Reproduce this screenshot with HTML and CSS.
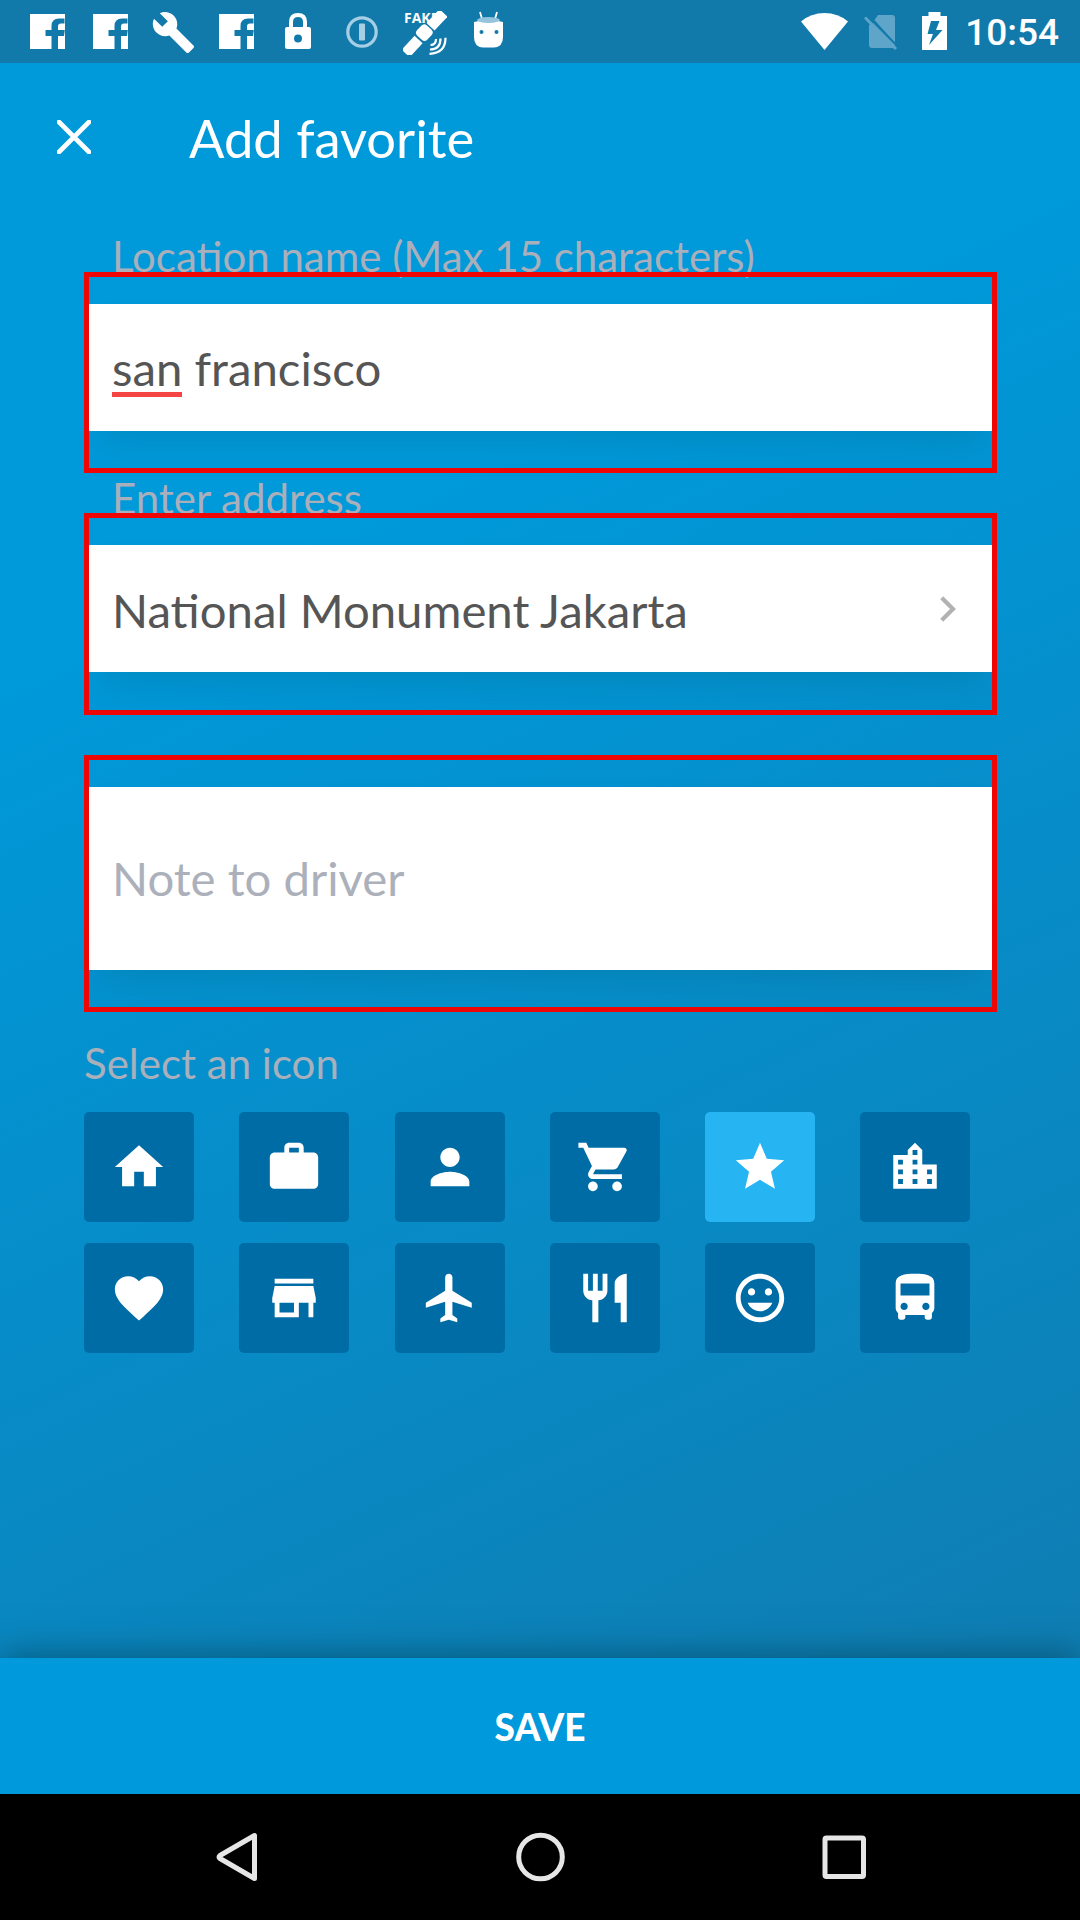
FILE: index.html
```html
<!DOCTYPE html>
<html lang="en">
<head>
<meta charset="utf-8">
<title>Add favorite</title>
<link rel="stylesheet" href="styles.css">
</head>
<body>
<div class="screen">
  <div class="status">
    <div class="status-left">
      <svg class="fb" viewBox="0 0 35 35"><path fill="#fff" d="M0 0h35v35h-7V22h6l.8-6H28v-3.500q0-3 3-3h3.500V4.500H29q-7.500 0-7.500 7.500v4h-6v6h6v13H0z" /></svg>
      <svg class="fb" viewBox="0 0 35 35"><path fill="#fff" d="M0 0h35v35h-7V22h6l.8-6H28v-3.500q0-3 3-3h3.500V4.500H29q-7.500 0-7.500 7.500v4h-6v6h6v13H0z" /></svg>
      <svg class="wrench" viewBox="0 0 23 23"><path fill="#fff" d="M22.700 19l-9.100-9.100c.9-2.300.4-5-1.500-6.900-2-2-5-2.400-7.400-1.300L9 6 6 9 1.600 4.700C.4 7.100.9 10.100 2.900 12.100c1.900 1.900 4.600 2.400 6.900 1.500l9.100 9.100c.4.4 1 .4 1.400 0l2.300-2.300c.5-.4.5-1.100.1-1.400z"/></svg>
      <svg class="fb" viewBox="0 0 35 35"><path fill="#fff" d="M0 0h35v35h-7V22h6l.8-6H28v-3.500q0-3 3-3h3.500V4.500H29q-7.500 0-7.500 7.500v4h-6v6h6v13H0z" /></svg>
      <svg class="lock" viewBox="0 0 26 36"><path d="M6 16V9q0-7 7-7t7 7v7" fill="none" stroke="#fff" stroke-width="4"/><path fill="#fff" fill-rule="evenodd" d="M2 14h22q2 0 2 2v18q0 2-2 2H2q-2 0-2-2V16q0-2 2-2zm11 7.500a4 4 0 1 0 0 8 4 4 0 0 0 0-8z"/></svg>
      <svg class="keyhole" viewBox="0 0 32 32"><circle cx="16" cy="16" r="14.200" fill="none" stroke="#a6cfe6" stroke-width="3.200"/><rect x="13" y="7.500" width="6" height="17" rx="1" fill="#a6cfe6"/></svg>
      <div class="fake">
        <span>FAKE</span>
        <svg viewBox="0 0 44 44"><g transform="rotate(43 21 22)" fill="#fff"><rect x="16" y="-6" width="11" height="19"/><rect x="14" y="14.500" width="14" height="14" rx="4"/><rect x="16" y="30.500" width="11" height="19"/></g><g fill="none" stroke="#fff" stroke-width="2.200"><path d="M27.500 34q5.500 0 5.500-6"/><path d="M27 38.500q10.500 0 10.500-11"/><path d="M26.500 42.800q16-.5 16-16"/></g></svg>
      </div>
      <svg class="droid" viewBox="0 0 31 37"><path d="M7 1l2 7M24 1l-2 7" stroke="#fff" stroke-width="1.800"/><path fill="#fff" d="M1 11q14.500-4 29 0v15q0 10-9 10.500H10Q1 36 1 26z"/><ellipse cx="15.500" cy="9" rx="11.500" ry="3" fill="#93c3dd"/><circle cx="8.500" cy="21" r="2" fill="#127aab"/><circle cx="23.500" cy="21" r="2" fill="#127aab"/></svg>
    </div>
    <div class="status-right">
      <svg class="wifi" viewBox="0 0 47 37"><path fill="#fff" d="M0 8.500Q10 0 23.500 0T47 8.500L23.500 37z"/></svg>
      <svg class="nosim" viewBox="0 0 34 37"><path fill="#5fa5c9" d="M14 1h14q3 0 3 3v25L10.500 6zM5 11l4-2 22 22v1q0 2-2 2H8q-3 0-3-3z"/><path d="M1 3.500L32 35" stroke="#5fa5c9" stroke-width="3"/><path d="M3.500 1.500L34 32.500" stroke="#127aab" stroke-width="1.600"/></svg>
      <svg class="battery" viewBox="0 0 25 38"><path fill="#fff" fill-rule="evenodd" d="M6.500 0h12v4H25v34H0V4h6.500zM9 9L5.500 22H11L7 33 20.500 18H14l3.500-9z"/></svg>
      <span class="time">10:54</span>
    </div>
  </div>

  <div class="appbar">
    <svg class="close" viewBox="0 0 34 34"><path d="M2 2l30 30M32 2L2 32" stroke="#fff" stroke-width="4.600" stroke-linecap="round"/></svg>
    <h1>Add favorite</h1>
  </div>

  <div class="form">
    <div class="label first">Location name (Max 15 characters)</div>
    <div class="field field-name"><div class="input"><span><span class="misspelt">san</span> francisco</span></div></div>
    <div class="label">Enter address</div>
    <div class="field field-address"><div class="input"><span>National Monument Jakarta</span><svg class="chevron" viewBox="0 0 16 26"><path d="M1.700 1.700L13 13 1.700 24.300" fill="none" stroke="#b2b2b2" stroke-width="4.200"/></svg></div></div>
    <div class="field field-note"><div class="input placeholder"><span>Note to driver</span></div></div>
    <div class="section">Select an icon</div>
    <div class="icons">
      <div class="tile"><svg viewBox="0 0 24 24"><path d="M10 20v-6h4v6h5v-8h3L12 3 2 12h3v8z"/></svg></div>
      <div class="tile"><svg viewBox="0 0 24 24"><path fill-rule="evenodd" d="M20 6h-4V4c0-1.110-.89-2-2-2h-4c-1.110 0-2 .89-2 2v2H4c-1.110 0-2 .89-2 2v11c0 1.110.89 2 2 2h16c1.110 0 2-.89 2-2V8c0-1.110-.89-2-2-2zm-6 0h-4V4h4z"/></svg></div>
      <div class="tile"><svg viewBox="0 0 24 24"><path d="M12 12c2.210 0 4-1.790 4-4s-1.790-4-4-4-4 1.790-4 4 1.790 4 4 4zm0 2c-2.670 0-8 1.340-8 4v2h16v-2c0-2.660-5.330-4-8-4z"/></svg></div>
      <div class="tile"><svg viewBox="0 0 24 24"><path d="M7 18c-1.100 0-1.990.9-1.990 2S5.900 22 7 22s2-.9 2-2-.9-2-2-2zM1 2v2h2l3.600 7.590-1.350 2.450c-.16.280-.25.610-.25.960 0 1.100.9 2 2 2h12v-2H7.420c-.14 0-.25-.11-.25-.25l.03-.12.900-1.630h7.450c.75 0 1.410-.41 1.750-1.030l3.580-6.490c.080-.14.120-.31.120-.48 0-.55-.45-1-1-1H5.210l-.94-2H1zm16 16c-1.100 0-1.990.9-1.990 2s.89 2 1.990 2 2-.9 2-2-.9-2-2-2z"/></svg></div>
      <div class="tile selected"><svg viewBox="0 0 24 24"><path d="M12 17.270L18.180 21l-1.640-7.030L22 9.240l-7.190-.61L12 2 9.190 8.630 2 9.240l5.460 4.730L5.820 21z"/></svg></div>
      <div class="tile"><svg viewBox="0 0 24 24"><path fill-rule="evenodd" d="M15 11V5l-3-3-3 3v2H3v14h18V11h-6zm-8 8H5v-2h2v2zm0-4H5v-2h2v2zm0-4H5V9h2v2zm6 8h-2v-2h2v2zm0-4h-2v-2h2v2zm0-4h-2V9h2v2zm0-4h-2V5h2v2zm6 12h-2v-2h2v2zm0-4h-2v-2h2v2z"/></svg></div>
      <div class="tile"><svg viewBox="0 0 24 24"><path d="M12 21.350l-1.450-1.320C5.400 15.360 2 12.280 2 8.500 2 5.420 4.420 3 7.500 3c1.740 0 3.410.81 4.500 2.090C13.090 3.810 14.760 3 16.500 3 19.580 3 22 5.420 22 8.500c0 3.780-3.400 6.860-8.550 11.540L12 21.350z"/></svg></div>
      <div class="tile"><svg viewBox="0 0 24 24"><path fill-rule="evenodd" d="M20 4H4v2h16V4zm1 10v-2l-1-5H4l-1 5v2h1v6h10v-6h4v6h2v-6h1zm-9 4H6v-4h6v4z"/></svg></div>
      <div class="tile"><svg viewBox="0 0 24 24"><path d="M21 16v-2l-8-5V3.500c0-.83-.67-1.500-1.500-1.500S10 2.670 10 3.500V9l-8 5v2l8-2.500V19l-2 1.500V22l3.500-1 3.500 1v-1.500L13 19v-5.500l8 2.500z"/></svg></div>
      <div class="tile"><svg viewBox="0 0 24 24"><path d="M11 9H9V2H7v7H5V2H3v7c0 2.120 1.660 3.840 3.750 3.970V22h2.500v-9.030C11.340 12.840 13 11.120 13 9V2h-2v7zm5-3v8h2.500v8H21V2c-2.760 0-5 2.240-5 4z"/></svg></div>
      <div class="tile"><svg viewBox="0 0 24 24"><path d="M11.990 2C6.470 2 2 6.480 2 12s4.470 10 9.990 10C17.520 22 22 17.520 22 12S17.520 2 11.990 2zM12 20c-4.420 0-8-3.580-8-8s3.580-8 8-8 8 3.580 8 8-3.580 8-8 8zm3.500-9c.83 0 1.500-.67 1.500-1.500S16.330 8 15.500 8 14 8.670 14 9.500s.67 1.500 1.500 1.500zm-7 0c.83 0 1.500-.67 1.500-1.500S9.330 8 8.500 8 7 8.670 7 9.500 7.670 11 8.500 11zm3.500 6.500c2.330 0 4.310-1.460 5.110-3.500H6.890c.8 2.040 2.780 3.500 5.110 3.500z"/></svg></div>
      <div class="tile"><svg viewBox="0 0 24 24"><path fill-rule="evenodd" d="M4 16c0 .88.39 1.670 1 2.220V20c0 .55.45 1 1 1h1c.55 0 1-.45 1-1v-1h8v1c0 .55.45 1 1 1h1c.55 0 1-.45 1-1v-1.780c.61-.55 1-1.340 1-2.220V6c0-3.500-3.580-4-8-4s-8 .5-8 4v10zm3.500 1c-.83 0-1.500-.67-1.500-1.500S6.670 14 7.500 14s1.500.67 1.500 1.500S8.330 17 7.500 17zm9 0c-.83 0-1.500-.67-1.500-1.500s.67-1.500 1.500-1.500 1.500.67 1.500 1.500-.67 1.500-1.500 1.500zm1.500-6H6V6h12v5z"/></svg></div>
    </div>
  </div>

  <div class="save">SAVE</div>
  <div class="nav">
    <svg viewBox="0 0 50 50"><path d="M43.500 3.500v43L9 26.500q-2-1.500 0-3z" fill="none" stroke="#e6e6e6" stroke-width="5" stroke-linejoin="round"/></svg>
    <svg viewBox="0 0 50 50"><circle cx="25.500" cy="25" r="21.800" fill="none" stroke="#e6e6e6" stroke-width="5"/></svg>
    <svg viewBox="0 0 50 50"><rect x="6" y="6" width="38.500" height="38.500" rx="1.500" fill="none" stroke="#e6e6e6" stroke-width="5"/></svg>
  </div>
</div>
</body>
</html>
```
FILE: styles.css
```css
* { box-sizing: border-box; }
body { margin: 0; }
svg { display: block; flex: none; }

.screen {
  display: flex;
  flex-direction: column;
  width: 1080px;
  height: 1920px;
  overflow: hidden;
  background: linear-gradient(155deg, #0099da 28%, #0f7db2 90%);
  font-family: Lato, sans-serif;
}

/* status bar */
.status {
  display: flex;
  justify-content: space-between;
  flex: none;
  height: 64px;
  padding: 0 21px 0 30px;
  background: #127aab;
  border-bottom: 1px solid #0099da;
}
.status-left, .status-right { display: flex; }
.fb { width: 35px; height: 35px; margin: 14px 28px 0 0; }
.wrench { width: 43px; height: 43px; margin: 10px 25px 0 -5px; }
.fb + .lock { margin-left: 3px; }
.lock { width: 26px; height: 36px; margin: 13px 35px 0 0; }
.keyhole { width: 32px; height: 32px; margin-top: 16px; }
.fake { position: relative; width: 44px; height: 44px; margin: 11px 26px 0 25px; }
.fake svg { position: relative; width: 44px; height: 44px; }
.fake span {
  position: absolute;
  left: 1px;
  top: 0;
  color: #fff;
  font: bold 14px/14px "Open Sans", sans-serif;
}
.droid { width: 31px; height: 37px; margin-top: 11px; }
.wifi { width: 47px; height: 37px; margin: 13px 16px 0 0; }
.nosim { width: 34px; height: 37px; margin: 14px 24px 0 0; }
.battery { width: 25px; height: 38px; margin: 12px 18px 0 0; }
.time { color: #fff; font: 500 37px/66px Roboto, sans-serif; }

/* title row */
.appbar {
  display: flex;
  align-items: center;
  flex: none;
  height: 147px;
  padding: 0 57px 1px;
}
.close { width: 34px; height: 34px; }
.appbar h1 {
  margin: 2px 0 0 98px;
  color: #fff;
  font-size: 52.500px;
  font-weight: 400;
  line-height: 62px;
}

/* form */
.form { flex: 1; padding: 0 83px 0 84px; }
.label {
  height: 40px;
  padding-left: 28px;
  color: #a9afbb;
  font-size: 42px;
  line-height: 50px;
  white-space: nowrap;
}
.label.first { margin-top: 21px; line-height: 48px; }
.field {
  position: relative;
  display: flex;
  padding-top: 27px;
  border: 5px solid #f00505;
  overflow: hidden;
}
.field-name { height: 201px; }
.field-address { height: 202px; margin-bottom: 40px; }
.field-note { height: 257px; }
.input {
  display: flex;
  align-items: center;
  justify-content: space-between;
  width: 100%;
  height: 127px;
  padding: 0 36px 0 23px;
  background: #fff;
  box-shadow: 0 20px 36px -10px rgba(0, 70, 80, .17);
  color: #555;
  font-size: 47.300px;
}
.field-name .input { padding-bottom: 1px; }
.field-address .input { padding-top: 1px; }
.field-note .input { height: 183px; padding-bottom: 2px; }
.placeholder { color: #abb0ba; }
.misspelt { position: relative; }
.misspelt::after {
  content: "";
  position: absolute;
  left: 0;
  bottom: -1px;
  width: 70px;
  height: 5px;
  background: #f44444;
}
.chevron { width: 16px; height: 26px; }
.section {
  margin: 26px 0 23.500px;
  color: #a9afbb;
  font-size: 42px;
  line-height: 50px;
}
.icons {
  display: grid;
  grid-template-columns: repeat(6, 110px);
  gap: 21px 45.300px;
}
.tile {
  display: flex;
  align-items: center;
  justify-content: center;
  height: 110px;
  border-radius: 5px;
  background: #006ca6;
}
.tile.selected { background: #27b4f2; }
.tile svg { width: 58px; height: 58px; fill: #fff; }

/* bottom action */
.save {
  display: flex;
  align-items: center;
  justify-content: center;
  flex: none;
  height: 136px;
  padding-top: 1px;
  background: #0099db;
  box-shadow: 0 -4px 32px rgba(0, 50, 65, .5);
  color: #fff;
  font-size: 37px;
  font-weight: 900;
}

/* system navigation */
.nav {
  display: flex;
  align-items: center;
  justify-content: space-between;
  flex: none;
  z-index: 1;
  height: 126px;
  padding: 0 211px;
  background: #000;
}
.nav svg { width: 50px; height: 50px; }
```
